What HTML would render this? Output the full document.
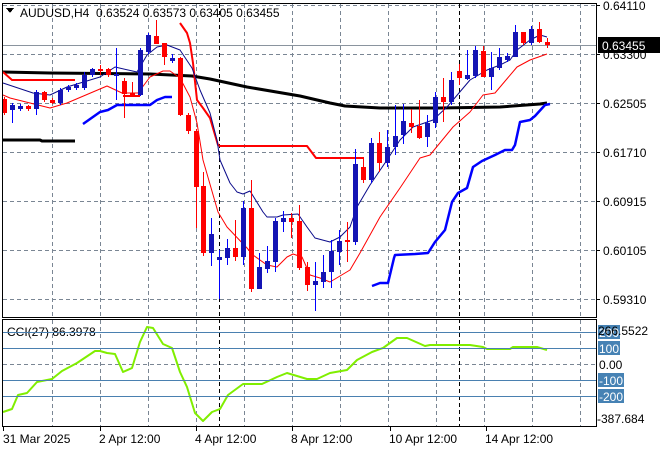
<!DOCTYPE html>
<html><head><meta charset="utf-8"><style>
html,body{margin:0;padding:0;background:#fff;width:660px;height:450px;overflow:hidden}
svg{display:block}
text{font-family:"Liberation Sans",sans-serif;font-size:12px;fill:#000}
</style></head><body>
<svg id="s" width="660" height="450" viewBox="0 0 660 450" xmlns="http://www.w3.org/2000/svg" shape-rendering="crispEdges">
<g id="grid" stroke="#7a8694" stroke-dasharray="4,3" stroke-width="1"></g>
<line x1="3" y1="45.5" x2="596" y2="45.5" stroke="#8a949e"/>
<line x1="219.5" y1="4" x2="219.5" y2="426" stroke="#000" stroke-dasharray="4,3"/>
<line x1="459.5" y1="4" x2="459.5" y2="426" stroke="#000" stroke-dasharray="4,3"/>
<g fill="none" shape-rendering="auto" stroke-linejoin="round">
<polyline stroke="#000" stroke-width="3" points="3,72 50,73 150,74 192,76 210,79 247,87 300,96 330,103 345,106 380,108 440,108 500,107 540,104 547,103"/>
<polyline stroke="#000" stroke-width="3" points="3,140 40,140 42,141 75,141"/>
<polyline stroke="#ff0000" stroke-width="2" points="3,72 12,80 75,80"/>
<polyline stroke="#ff0000" stroke-width="2" points="123,96 140,96"/>
<polyline stroke="#ff0000" stroke-width="2" points="180,23 187,33 190,43 193,63 197,100 203,108 210,118 218,145 220,146 307,146 316,158 363,158"/>
<polyline stroke="#0000ff" stroke-width="2.5" points="83,124 100,112 108,110 117,105 150,105 157,100 165,97 172,97"/>
<polyline stroke="#0000ff" stroke-width="2.5" points="372,286 380,283 388,283 394,258 395,255 415,254 428,253 435,242 445,230 452,202 458,193 467,188 473,167 482,161 495,155 505,150 512,150 515,145 520,122 530,120 535,116 545,105 550,104"/>
<polyline stroke="#0a0a8a" stroke-width="1" points="3,83 33,93 50,95 67,87 100,77 115,67 137,72 147,55 157,47 167,45 180,50 192,68 200,90 210,113 217,140 220,160 230,183 237,192 243,194 250,191 263,212 267,217 277,217 283,215 298,214 307,227 315,238 330,242 340,237 350,227 357,207 370,185 387,160 400,140 413,127 433,120 447,107 453,100 470,80 487,70 500,65 510,60 517,50 530,40 540,35 547,37"/>
<polyline stroke="#ff0000" stroke-width="1" points="3,95 10,98 50,108 67,103 107,86 122,93 138,93 150,77 163,71 170,71 180,78 190,97 197,123 203,160 218,212 227,227 247,248 253,255 267,265 277,267 287,257 293,254 302,257 310,275 320,278 330,282 350,270 360,253 380,217 400,188 420,158 430,155 453,127 470,112 483,95 495,93 517,67 530,60 547,54"/>
<polyline stroke="#80ee00" stroke-width="2" points="3,412 12,409 18,395 27,393 37,382 52,379 62,371 77,363 95,351 100,351 107,353 115,354 123,372 132,368 140,342 147,327 153,328 163,344 172,348 180,372 187,387 195,413 203,421 212,412 220,409 228,395 243,384 262,384 277,377 287,373 307,379 317,379 330,373 347,370 357,360 372,352 383,348 397,338 407,338 425,346 430,345 470,345 483,347 487,349 510,349 513,347 537,347 547,350"/>
</g>
<g id="c"></g>
<rect x="2.5" y="3.5" width="594" height="314" fill="none" stroke="#000"/>
<rect x="2.5" y="319.5" width="594" height="107" fill="none" stroke="#000"/>
<g id="ax" stroke="#000"></g>
<polygon points="6,8 14,8 10,13" fill="#000"/>
<text x="20" y="17">AUDUSD,H4&#160; 0.63524 0.63573 0.63405 0.63455</text>
<text x="7" y="336">CCI(27) 86.3978</text>
<g id="lab"></g>
<rect x="598" y="37" width="62" height="16" fill="#000"/>
<text x="602" y="50" style="fill:#fff">0.63455</text>
<g id="tl">
<text x="3" y="443">31 Mar 2025</text>
<text x="99" y="443">2 Apr 12:00</text>
<text x="195" y="443">4 Apr 12:00</text>
<text x="291" y="443">8 Apr 12:00</text>
<text x="389" y="443">10 Apr 12:00</text>
<text x="485" y="443">14 Apr 12:00</text>
</g>
</svg>
<script>
var NS="http://www.w3.org/2000/svg";
function el(p,t,a){var e=document.createElementNS(NS,t);for(var k in a)e.setAttribute(k,a[k]);p.appendChild(e);return e;}
var g=document.getElementById('grid');
[52,100,148,196,244,292,340,388,436,484,532,580].forEach(function(x){el(g,'line',{x1:x+.5,y1:4,x2:x+.5,y2:317});el(g,'line',{x1:x+.5,y1:320,x2:x+.5,y2:426});});
[5,54,103,152,201,250,299].forEach(function(y){el(g,'line',{x1:3,y1:y+.5,x2:596,y2:y+.5});});
el(g,'line',{x1:3,y1:364.5,x2:596,y2:364.5});
[332,348,380,396].forEach(function(y){el(document.getElementById('s'),'line',{x1:3,y1:y+.5,x2:596,y2:y+.5,stroke:'#4a80b0'});});
var d=[[4,'r',99,113,97,115],[12,'b',105,110,103,123],[20,'b',106,109,104,111],[28,'r',106,109,105,111],[36,'b',92,109,90,115],[44,'r',92,100,91,102],[52,'r',100,103,98,104],[60,'b',90,103,88,105],[68,'b',87,90,85,92],[76,'b',85,88,83,90],[84,'b',75,88,72,90],[92,'b',69,75,68,77],[100,'r',69,70,65,75],[108,'r',69,75,68,77],[116,'b',74,76,48,100],[124,'r',81,94,78,118],[132,'r',93,95,82,95],[140,'b',50,95,48,96],[148,'b',35,52,33,54],[156,'r',36,44,20,44],[164,'r',43,57,43,65],[172,'b',58,61,54,63],[180,'r',58,115,57,116],[188,'r',115,131,113,134],[196,'r',131,187,129,228],[203,'r',186,253,172,256],[211,'b',234,253,218,266],[219,'b',257,260,250,299],[227,'b',248,258,239,265],[235,'r',248,257,220,261],[243,'b',208,257,201,265],[251,'r',208,289,180,292],[259,'b',267,289,253,289],[267,'b',261,269,246,273],[275,'b',221,262,218,272],[283,'b',218,222,211,232],[291,'r',218,222,213,238],[299,'r',221,268,205,270],[307,'r',267,285,262,291],[315,'b',281,285,262,311],[323,'b',272,282,255,288],[331,'b',251,272,240,288],[339,'b',241,252,230,265],[347,'r',240,242,222,262],[355,'b',164,242,149,245],[363,'r',167,180,157,183],[371,'b',143,180,138,183],[379,'r',143,163,132,172],[387,'b',147,163,130,167],[395,'b',136,147,105,155],[403,'b',121,135,104,144],[411,'r',123,127,109,133],[419,'r',126,138,100,139],[427,'b',123,137,115,147],[435,'b',97,123,92,128],[443,'r',97,102,78,122],[451,'b',80,102,72,105],[459,'r',71,78,64,85],[467,'b',75,79,50,80],[475,'b',50,76,46,78],[483,'r',51,77,46,77],[491,'b',68,77,52,90],[499,'b',57,68,48,70],[507,'b',56,60,53,62],[515,'b',32,57,25,57],[523,'r',32,43,32,45],[531,'b',29,43,26,45],[539,'r',29,42,22,43],[547,'r',42,45,38,48]];
var c=document.getElementById('c');
d.forEach(function(k){var x=k[0],col=k[1]=='r'?'#ff0000':'#0000ff',bc=k[1]=='r'?'#ff0000':'#1414b4';
el(c,'rect',{x:x,y:k[4],width:1,height:k[5]-k[4],fill:col});
el(c,'rect',{x:x-2,y:k[2],width:5,height:Math.max(2,k[3]-k[2]),fill:bc});});
var lab=document.getElementById('lab'),ax=document.getElementById('ax');
[['0.64110',5],['0.63300',54],['0.62505',103],['0.61710',152],['0.60915',201],['0.60105',250],['0.59310',299]].forEach(function(l){el(ax,'line',{x1:597,y1:l[1]+.5,x2:600,y2:l[1]+.5});var t=el(lab,'text',{x:603,y:l[1]+5});t.textContent=l[0];});
[[332,'200'],[348,'100'],[380,'-100'],[396,'-200']].forEach(function(l){el(lab,'rect',{x:598,y:l[0]-7,width:l[1].length>3?26:22,height:14,fill:'#4682b4'});var t=el(lab,'text',{x:599,y:l[0]+5,style:'fill:#fff'});t.textContent=l[1];});
var t=el(lab,'text',{x:598,y:335});t.textContent='266.5522';
t=el(lab,'text',{x:599,y:369});t.textContent='0.00';
t=el(lab,'text',{x:597,y:423});t.textContent='-387.684';
[3,100,196,292,390,486].forEach(function(x){el(ax,'line',{x1:x+.5,y1:427,x2:x+.5,y2:431});});
</script>
</body></html>
